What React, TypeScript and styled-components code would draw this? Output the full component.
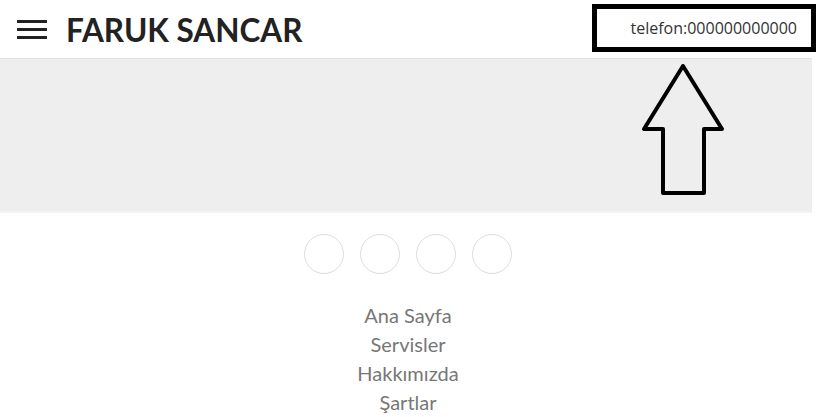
import React from "react";
import styled, { createGlobalStyle } from "styled-components";

const Global = createGlobalStyle`
  html, body { margin: 0; padding: 0; background: #fff; }
  body { font-family: "Lato", "Open Sans", sans-serif; overflow: hidden; }
`;

const Page = styled.div`
  position: relative;
  width: 812px;
  height: 417px;
`;

const Header = styled.header`
  height: 58px;
  border-bottom: 1px solid #e2e2e2;
  display: flex;
  align-items: center;
  padding-left: 17px;
  box-sizing: content-box;
`;

const Burger = styled.button`
  width: 30px;
  height: 19px;
  padding: 0;
  border: 0;
  background: none;
  display: flex;
  flex-direction: column;
  justify-content: space-between;
  margin-right: 19px;
  span {
    display: block;
    height: 3px;
    background: #222;
  }
`;

const Title = styled.h1`
  margin: 0;
  font-family: "Lato", sans-serif;
  font-weight: 700;
  font-size: 31.5px;
  letter-spacing: 0;
  color: #222;
  margin-top: 2px;
`;

const Phone = styled.div`
  margin-left: auto;
  margin-right: -4px;
  align-self: flex-start;
  margin-top: 4px;
  width: 200px;
  height: 38px;
  border: 5px solid #000;
  display: flex;
  align-items: center;
  justify-content: flex-end;
  padding-right: 14px;
  box-sizing: content-box;
  font-family: "Open Sans", sans-serif;
  font-size: 16px;
  color: #333;
`;

const Banner = styled.section`
  height: 152px;
  background: #eeeeee;
  border-bottom: 2px solid #f3f3f3;
`;

const Socials = styled.div`
  display: flex;
  justify-content: center;
  gap: 16px;
  margin-top: 21px;
  padding-left: 4px;
`;

const Circle = styled.a`
  width: 38px;
  height: 38px;
  border-radius: 50%;
  border: 1px solid #dedede;
`;

const Nav = styled.nav`
  display: flex;
  flex-direction: column;
  align-items: center;
  margin-top: 27px;
  padding-left: 4px;
`;

const NavLink = styled.a`
  font-family: "Lato", sans-serif;
  font-size: 20px;
  line-height: 29px;
  color: #777;
  text-decoration: none;
`;

const Arrow = styled.svg`
  position: absolute;
  left: 638px;
  top: 60px;
`;

export default function App() {
  return (
    <Page>
      <Global />
      <Header>
        <Burger aria-label="menu">
          <span />
          <span />
          <span />
        </Burger>
        <Title>FARUK SANCAR</Title>
        <Phone>telefon:000000000000</Phone>
      </Header>
      <Banner />
      <Socials>
        <Circle />
        <Circle />
        <Circle />
        <Circle />
      </Socials>
      <Nav>
        <NavLink>Ana Sayfa</NavLink>
        <NavLink>Servisler</NavLink>
        <NavLink>Hakkımızda</NavLink>
        <NavLink>Şartlar</NavLink>
      </Nav>
      <Arrow width="92" height="140" viewBox="638 60 92 140">
        <polygon
          points="683,66 644,129 663,129 663,193 704,193 704,129 722,129"
          fill="none"
          stroke="#000"
          strokeWidth="4"
          strokeLinejoin="round"
        />
      </Arrow>
    </Page>
  );
}
